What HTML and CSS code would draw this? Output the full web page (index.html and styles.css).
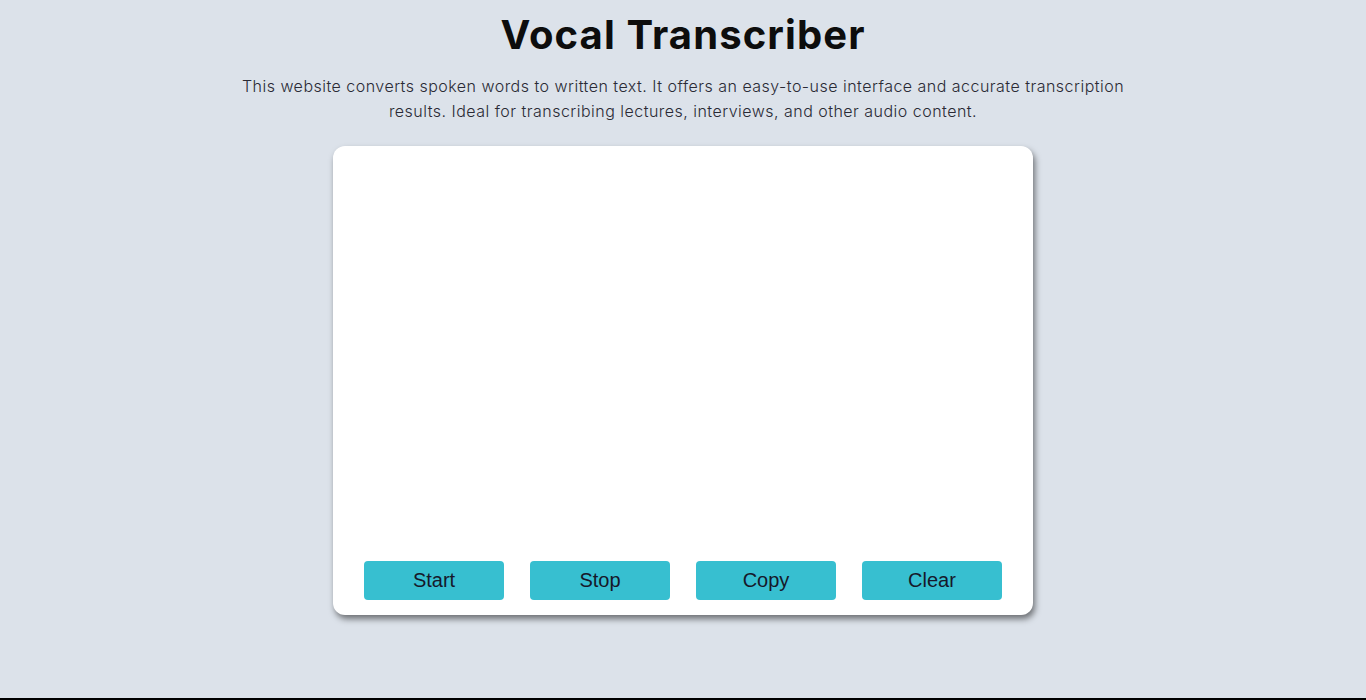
FILE: index.html
```html
<!DOCTYPE html>
<html lang="en">
<head>
<meta charset="utf-8">
<title>Vocal Transcriber</title>
<link rel="stylesheet" href="styles.css">
</head>
<body>
<div class="page">
  <h1 class="title">Vocal Transcriber</h1>
  <p class="intro">This website converts spoken words to written text. It offers an easy-to-use interface and accurate transcription results. Ideal for transcribing lectures, interviews, and other audio content.</p>
  <div class="card">
    <div class="output"></div>
    <div class="actions">
      <button class="btn">Start</button>
      <button class="btn">Stop</button>
      <button class="btn">Copy</button>
      <button class="btn">Clear</button>
    </div>
  </div>
</div>
</body>
</html>
```
FILE: styles.css
```css
html {
  background: #000;
}
body {
  margin: 0;
}
.page {
  min-height: 698px;
  background: #dce2ea;
  display: flex;
  flex-direction: column;
  align-items: center;
  font-family: Inter, "Noto Sans", sans-serif;
}
.title {
  margin: 10px 0 0;
  font-size: 40px;
  font-weight: 700;
  letter-spacing: 1.1px;
  line-height: 50px;
  color: #0d0d0d;
}
.intro {
  margin: 14px 0 0;
  width: 900px;
  text-align: center;
  font-size: 16px;
  font-weight: 300;
  letter-spacing: 0.48px;
  line-height: 25px;
  color: #2a2a35;
}
.card {
  margin-top: 22px;
  width: 700px;
  height: 469px;
  background: #fff;
  border-radius: 12px;
  box-shadow: 2px 4px 6px rgba(0, 0, 0, 0.5);
  display: flex;
  flex-direction: column;
  box-sizing: border-box;
  padding: 0 31px 15px;
}
.output {
  flex: 1;
}
.actions {
  display: flex;
  gap: 26px;
}
.btn {
  width: 140px;
  height: 39px;
  border: none;
  border-radius: 4px;
  background: #37bfd0;
  font-family: "Liberation Sans", Arial, sans-serif;
  font-size: 20px;
  color: #16182a;
  padding: 0;
}
```
